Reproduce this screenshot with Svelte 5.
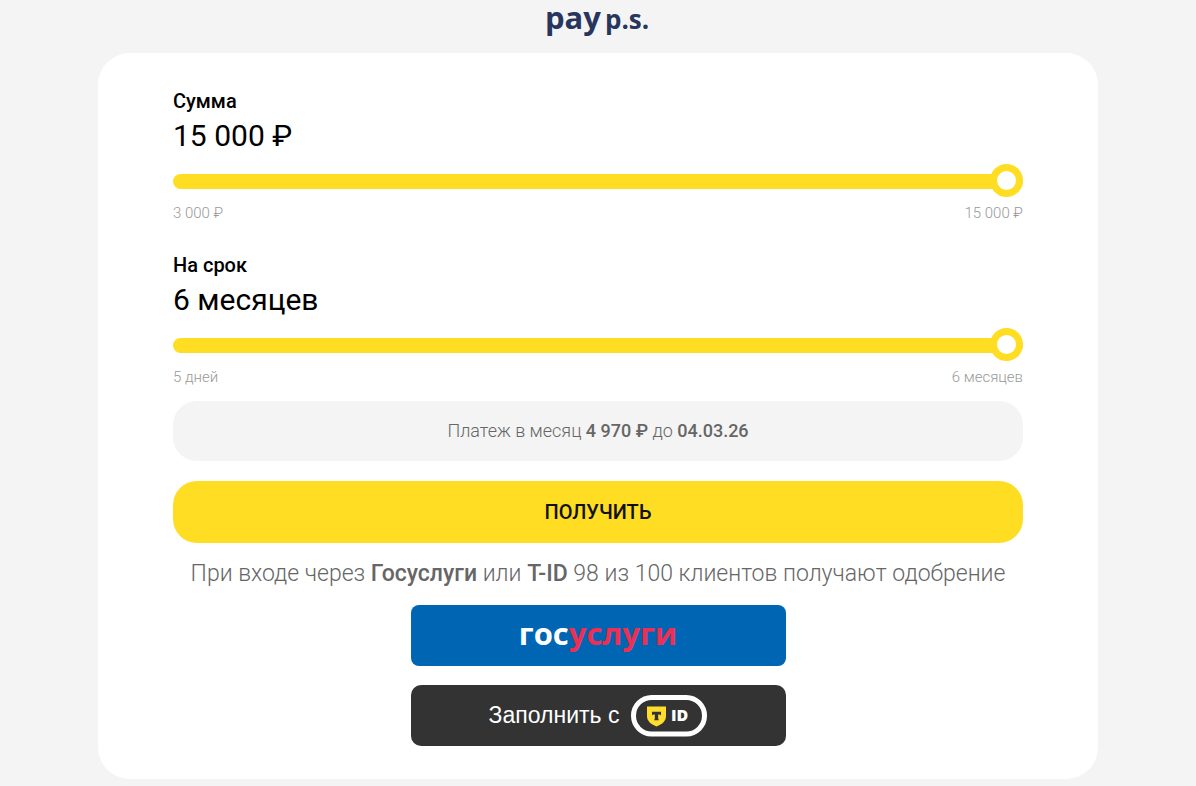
<script>
    let amount = 15000;
    let term = 6;

    const rate = 4970 / 15000;
    const terms = ['5 дней', '1 месяц', '2 месяца', '3 месяца', '4 месяца', '5 месяцев', '6 месяцев'];

    function format(value) {
        return String(value).replace(/\B(?=(\d{3})+$)/g, '\u00a0');
    }

    $: payment = Math.round(amount * rate);
</script>

<header>
    <a class="logo" href="/" aria-label="pay p.s.">
        <svg width="110" height="45" viewBox="0 0 110 45">
            <text class="pay" x="2" y="29">pay</text>
            <text x="62" y="29">p.s.</text>
        </svg>
    </a>
</header>

<main class="card">
    <form onsubmit={(e) => e.preventDefault()}>
        <div class="field">
            <label for="amount">Сумма</label>
            <output for="amount">{format(amount)} ₽</output>
            <input id="amount" type="range" min="3000" max="15000" step="1000" bind:value={amount} />
            <div class="limits">
                <span>3 000 ₽</span>
                <span>15 000 ₽</span>
            </div>
        </div>

        <div class="field">
            <label for="term">На срок</label>
            <output for="term">{terms[term]}</output>
            <input id="term" type="range" min="0" max="6" bind:value={term} />
            <div class="limits">
                <span>{terms[0]}</span>
                <span>{terms[6]}</span>
            </div>
        </div>

        <p class="payment">Платеж в месяц <b>{format(payment)} ₽</b> до <b>04.03.26</b></p>
        <button class="submit" type="submit">ПОЛУЧИТЬ</button>
    </form>

    <p class="hint">При входе через <b>Госуслуги</b> или <b>T-ID</b> 98 из 100 клиентов получают одобрение</p>

    <div class="logins">
        <button class="login gosuslugi" type="button">гос<span>услуги</span></button>
        <button class="login tid" type="button">
            Заполнить с
            <svg width="76" height="42" viewBox="0 0 76 42" aria-hidden="true">
                <rect x="2.5" y="2.5" width="71" height="36.5" rx="18.2" fill="none" stroke="#fff" stroke-width="5" />
                <path d="M16 11.500h19v9.500c0 5-3.500 8-9.500 10.500C19.500 29 16 26 16 21z" fill="#ffdd2d" />
                <path d="M21 16.800h9v3.800c-.5-.7-1.400-1-2.400-1h-.4v3.500c0 1 .3 1.800.8 2.200h-5c.5-.4.8-1.200.8-2.200v-3.500h-.4c-1 0-1.900.3-2.400 1z" fill="#333" />
                <text x="40" y="26">ID</text>
            </svg>
        </button>
    </div>
</main>

<style>
    :global(body) {
        background: #f4f4f4;
        color: #000;
        font-family: Roboto, sans-serif;
    }

    header {
        display: flex;
        justify-content: center;
        padding-bottom: 8px;
    }

    .logo {
        display: flex;
    }

    .logo text {
        font: 700 26px "Open Sans", sans-serif;
        fill: #28365e;
    }

    .logo .pay {
        font-size: 31px;
    }

    .card {
        box-sizing: border-box;
        max-width: 1000px;
        margin: 0 auto;
        padding: 36px 75px 33px;
        border-radius: 32px;
        background: #fff;
    }

    .field {
        display: flex;
        flex-direction: column;
        margin-bottom: 31px;
    }

    .field + .field {
        margin-bottom: 15px;
    }

    label {
        font-size: 20px;
        line-height: 24px;
        font-weight: 500;
    }

    output {
        font-size: 30px;
        line-height: 46px;
    }

    input {
        appearance: none;
        width: 100%;
        height: 33px;
        margin: 6px 0;
        background: none;
        cursor: pointer;
    }

    input::-webkit-slider-runnable-track {
        height: 15px;
        border-radius: 8px;
        background: #ffdd22;
    }

    input::-webkit-slider-thumb {
        appearance: none;
        box-sizing: border-box;
        width: 33px;
        height: 33px;
        margin-top: -10px;
        border: 7px solid #ffdd22;
        border-radius: 50%;
        background: #fff;
    }

    .limits {
        display: flex;
        justify-content: space-between;
        color: #999;
        font-size: 15px;
        line-height: 18px;
        font-weight: 300;
    }

    .payment {
        margin: 0 0 20px;
        border-radius: 24px;
        background: #f4f4f4;
        color: #666;
        font-size: 18px;
        line-height: 60px;
        font-weight: 300;
        text-align: center;
    }

    b {
        font-weight: 500;
    }

    button {
        border: none;
        cursor: pointer;
    }

    .submit {
        display: block;
        width: 100%;
        height: 62px;
        border-radius: 24px;
        background: #ffdd22;
        color: #111;
        font: 500 20px Roboto, sans-serif;
    }

    .hint {
        margin: 15px 0;
        color: #666;
        font-size: 23px;
        line-height: 32px;
        font-weight: 300;
        text-align: center;
    }

    .logins {
        display: flex;
        flex-direction: column;
        align-items: center;
        gap: 19px;
    }

    .login {
        display: flex;
        align-items: center;
        justify-content: center;
        width: 100%;
        max-width: 375px;
        height: 61px;
        border-radius: 8px;
        color: #fff;
    }

    .gosuslugi {
        padding-bottom: 6px;
        background: #0066b3;
        font: 700 31px "Open Sans", sans-serif;
    }

    .gosuslugi span {
        color: #ee2f53;
    }

    .tid {
        gap: 12px;
        border-radius: 10px;
        background: #333;
        font: 23px "Liberation Sans", Arial, sans-serif;
    }

    .tid text {
        font: 800 16px "Open Sans", sans-serif;
        fill: #fff;
    }
</style>
